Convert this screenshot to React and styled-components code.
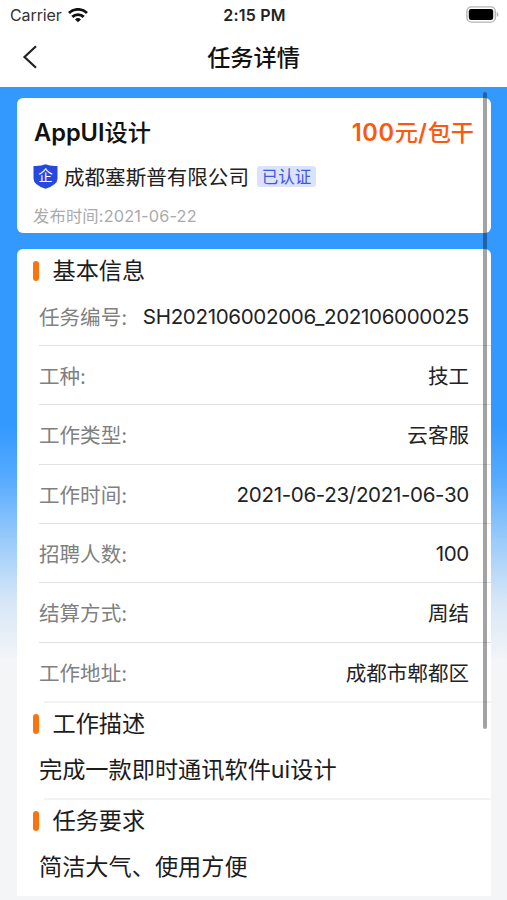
import React from 'react';
import styled, { createGlobalStyle } from 'styled-components';

const Global = createGlobalStyle`
  * { box-sizing: border-box; }
  body {
    margin: 0;
    overflow: hidden;
    background: #f3f5f7;
    color: #1c1c1c;
    font-family: Inter, "Noto Sans CJK SC", sans-serif;
  }
`;

const Screen = styled.div`
  position: relative;
  width: 507px;
  height: 900px;
  overflow: hidden;
`;

const StatusBar = styled.header`
  display: grid;
  grid-template-columns: 1fr auto 1fr;
  align-items: center;
  height: 30px;
  padding: 0 8px 0 10px;
  background: #fff;
`;

const Carrier = styled.div`
  display: flex;
  align-items: center;
  gap: 6px;
  font-size: 16px;
  line-height: 30px;
  letter-spacing: -0.1px;
  color: #333;
`;

const Clock = styled.div`
  font-size: 16px;
  font-weight: 600;
  line-height: 30px;
  letter-spacing: 0.2px;
  color: #222;
`;

const BatterySlot = styled.div`
  display: flex;
  justify-content: flex-end;
  padding-bottom: 2px;
`;

const NavBar = styled.nav`
  display: grid;
  grid-template-columns: 60px 1fr 60px;
  align-items: center;
  height: 57px;
  padding-bottom: 1px;
  background: #fff;
`;

const BackButton = styled.button`
  display: flex;
  padding: 0 0 2px 22px;
  border: 0;
  background: none;
`;

const NavTitle = styled.h1`
  margin: 0;
  text-align: center;
  font-size: 23.2px;
  font-weight: 500;
  line-height: 56px;
  color: #111;
`;

const Content = styled.main`
  display: flex;
  flex-direction: column;
  gap: 16px;
  height: 813px;
  padding: 11px 16px 0 17px;
  background: linear-gradient(
    #3399ff 0,
    #3399ff 338px,
    #58abfe 393px,
    #9acbfb 453px,
    #d6e6f7 513px,
    #f3f5f7 573px
  );
`;

const Card = styled.section`
  height: ${(p) => p.$height}px;
  flex: none;
  border-radius: ${(p) => (p.$flatBottom ? '6px 6px 0 0' : '6px')};
  background: #fff;
`;

const Headline = styled.div`
  display: flex;
  justify-content: space-between;
  height: 64px;
  padding: 3px 17px 0;
  line-height: 64px;
  font-size: 23.2px;
  font-weight: 500;
`;

const JobName = styled.span`
  color: #111;
`;

const Price = styled.span`
  color: #fa5a10;
`;

const Latin = styled.span`
  font-size: 23.6px;
  font-weight: 600;
  letter-spacing: ${(p) => p.$tracking || 0}px;
`;

const Company = styled.div`
  display: flex;
  align-items: center;
  height: 28px;
  padding-left: 16px;
`;

const CompanyName = styled.span`
  margin-left: 6px;
  padding-top: 3px;
  font-size: 20.55px;
  line-height: 28px;
  color: #222;
`;

const Tag = styled.span`
  margin-left: 8px;
  width: 59px;
  height: 21px;
  border-radius: 3px;
  background: #dbe2fd;
  color: #4058dc;
  font-size: 16.5px;
  line-height: 22px;
  text-align: center;
`;

const Published = styled.div`
  padding: 12px 0 0 16px;
  font-size: 16.3px;
  line-height: 28px;
  letter-spacing: 0.17px;
  color: #aaa;
`;

const SectionTitle = styled.h2`
  display: flex;
  align-items: center;
  gap: 13.5px;
  height: 44px;
  margin: 0;
  padding-left: 16px;
  font-size: 23.2px;
  font-weight: 400;
  line-height: 48px;
  color: #1c1c1c;

  &::before {
    content: '';
    width: 6px;
    height: 20px;
    border-radius: 3px;
    background: #fa7510;
  }
`;

const Rows = styled.dl`
  margin: 0;
`;

const Row = styled.div`
  display: flex;
  justify-content: space-between;
  height: 59.33px;
  margin-left: 22px;
  padding-right: 22px;
  border-bottom: 1px solid #e2e2e2;
  font-size: 20.55px;
  line-height: 62px;

  &:first-child { height: 53px; line-height: 50px; }
  &:last-child { height: 58.33px; border-bottom: 0; }
`;

const Label = styled.dt`
  color: #808080;
`;

const Value = styled.dd`
  margin: 0;
  color: #222;
  ${(p) => p.$numeric && 'letter-spacing: -0.33px; margin-top: -1px;'}
`;

const Block = styled.div`
  &::before {
    content: '';
    display: block;
    height: 2px;
    margin-left: 27px;
    background: #f3f3f4;
  }

  ${SectionTitle} {
    height: 42px;
    line-height: 46px;
  }
`;

const Paragraph = styled.p`
  height: 53px;
  margin: 0;
  padding-left: 22px;
  font-size: 23.2px;
  line-height: 51px;
  color: #1c1c1c;
`;

const ScrollThumb = styled.div`
  position: absolute;
  top: 92px;
  right: 20px;
  width: 4px;
  height: 637px;
  border-radius: 2px;
  background: rgba(0, 0, 0, 0.36);
`;

const details = [
  ['任务编号:', 'SH202106002006_202106000025'],
  ['工种:', '技工'],
  ['工作类型:', '云客服'],
  ['工作时间:', '2021-06-23/2021-06-30'],
  ['招聘人数:', '100'],
  ['结算方式:', '周结'],
  ['工作地址:', '成都市郫都区'],
];

const WifiIcon = () => (
  <svg width="20" height="15" viewBox="0 0 20 15">
    <g fill="none" stroke="#111" strokeWidth="2.9">
      <path d="M1 5a13 13 0 0 1 18 0" />
      <path d="M4.3 8.9a8.2 8.2 0 0 1 11.4 0" />
    </g>
    <path d="M10 14.2 7 11.5a4.3 4.3 0 0 1 6 0Z" fill="#111" />
  </svg>
);

const BatteryIcon = () => (
  <svg width="33" height="17" viewBox="0 0 33 17">
    <rect x="0.9" y="0.9" width="28.4" height="15.2" rx="4.4" fill="#fff" stroke="#b5b5b5" strokeWidth="1.4" />
    <rect x="2.8" y="2.9" width="24.4" height="11.2" rx="2.4" fill="#000" />
    <path d="M30.7 6q1.8.8 1.8 2.5t-1.8 2.5Z" fill="#b5b5b5" />
  </svg>
);

const BackIcon = () => (
  <svg width="16" height="24" viewBox="0 0 16 24">
    <path d="M14 1.2 2.5 12 14 22.8" fill="none" stroke="#222" strokeWidth="2.2" />
  </svg>
);

const Shield = styled.svg`
  flex: none;
  font-family: "Noto Sans CJK SC", sans-serif;
  font-size: 14.5px;
  font-weight: 400;
`;

const CompanyBadge = () => (
  <Shield width="25" height="25" viewBox="0 0 25 25">
    <path d="M12.5.3Q17 2.4 24.5 2v12.5q0 6.4-12 10.3Q.5 20.9.5 14.5V2Q8 2.4 12.5.3Z" fill="#2748dc" />
    <text x="12.5" y="17" textAnchor="middle" fill="#fff">企</text>
  </Shield>
);

export default function App() {
  return (
    <Screen>
      <Global />
      <StatusBar>
        <Carrier>Carrier <WifiIcon /></Carrier>
        <Clock>2:15 PM</Clock>
        <BatterySlot><BatteryIcon /></BatterySlot>
      </StatusBar>
      <NavBar>
        <BackButton aria-label="返回"><BackIcon /></BackButton>
        <NavTitle>任务详情</NavTitle>
      </NavBar>
      <Content>
        <Card $height={135}>
          <Headline>
            <JobName><Latin>AppUI</Latin>设计</JobName>
            <Price><Latin $tracking={0.6}>100</Latin>元<Latin $tracking={0.8}>/</Latin>包干</Price>
          </Headline>
          <Company>
            <CompanyBadge />
            <CompanyName>成都塞斯普有限公司</CompanyName>
            <Tag>已认证</Tag>
          </Company>
          <Published>发布时间:2021-06-22</Published>
        </Card>
        <Card $height={647} $flatBottom>
          <SectionTitle>基本信息</SectionTitle>
          <Rows>
            {details.map(([label, value]) => (
              <Row key={label}>
                <Label>{label}</Label>
                <Value $numeric={/\d/.test(value)}>{value}</Value>
              </Row>
            ))}
          </Rows>
          <Block>
            <SectionTitle>工作描述</SectionTitle>
            <Paragraph>完成一款即时通讯软件ui设计</Paragraph>
          </Block>
          <Block>
            <SectionTitle>任务要求</SectionTitle>
            <Paragraph>简洁大气、使用方便</Paragraph>
          </Block>
        </Card>
      </Content>
      <ScrollThumb />
    </Screen>
  );
}
